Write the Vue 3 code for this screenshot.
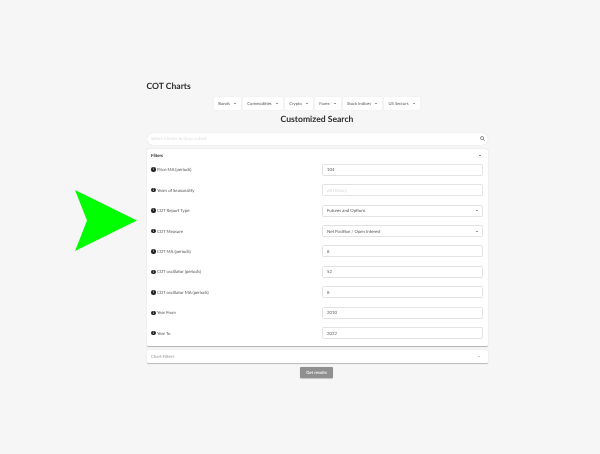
<script setup>
const menus = [
  { name: 'Bonds', width: 27 },
  { name: 'Commodities', width: 40 },
  { name: 'Crypto', width: 28 },
  { name: 'Forex', width: 26 },
  { name: 'Stock Indices', width: 39 },
  { name: 'US Sectors', width: 36 },
]
const rows = [
  { label: 'Price MA (periods)', value: '104' },
  { label: 'Years of Seasonality', value: 'All History', placeholder: true },
  { label: 'COT Report Type', value: 'Futures and Options', select: true },
  { label: 'COT Measure', value: 'Net Position / Open Interest', select: true },
  { label: 'COT MA (periods)', value: '8' },
  { label: 'COT oscillator (periods)', value: '52' },
  { label: 'COT oscillator MA (periods)', value: '8' },
  { label: 'Year From', value: '2010' },
  { label: 'Year To', value: '2022' },
]
</script>

<template>
  <div class="page">
    <svg class="arrow" width="64" height="64" viewBox="0 0 64 64">
      <polygon points="1,1 63,31.5 1,62 13,31.5" fill="#00ff00" />
    </svg>
    <main class="container">
      <h1 class="title">COT Charts</h1>
      <nav class="menus">
        <button v-for="m in menus" :key="m.name" class="menu" :style="{ width: m.width + 'px' }">
          <span>{{ m.name }}</span><i class="caret"></i>
        </button>
      </nav>
      <h2 class="subtitle">Customized Search</h2>
      <div class="search">
        <span class="search-text">Select a ticker to draw a chart</span>
        <svg width="5" height="5" viewBox="0 0 12 12" fill="none" stroke="#777" stroke-width="2">
          <circle cx="5" cy="5" r="3.8" /><path d="M8 8l3.5 3.5" />
        </svg>
      </div>
      <section class="panel">
        <header class="panel-head">
          <span>Filters</span><i class="caret up"></i>
        </header>
        <div class="rows">
          <div v-for="r in rows" :key="r.label" class="row">
            <div class="label">
              <span class="info">i</span>
              <span>{{ r.label }}</span>
            </div>
            <div class="field" :class="{ muted: r.placeholder }">
              <span>{{ r.value }}</span>
              <i v-if="r.select" class="caret small"></i>
            </div>
          </div>
        </div>
      </section>
      <section class="collapsed">
        <span>Chart Filters</span><i class="caret faint"></i>
      </section>
      <div class="actions">
        <button class="submit">Get results</button>
      </div>
    </main>
  </div>
</template>

<style>
html, body { margin: 0; background: #f6f6f6; }
</style>

<style scoped>
.page {
  position: relative;
  width: 600px;
  height: 454px;
  overflow: hidden;
  background: #f6f6f6;
  font-family: Lato, "Open Sans", sans-serif;
  color: #333;
  text-rendering: geometricPrecision;
}
.arrow { position: absolute; left: 74px; top: 189px; }
.container {
  width: 341px;
  margin-left: 146.5px;
  padding-top: 79.5px;
  display: flex;
  flex-direction: column;
  filter: blur(0.3px);
}
.title {
  margin: 0;
  height: 13px;
  line-height: 13px;
  font-size: 8.6px;
  font-weight: 700;
  color: #2e2e2e;
}
.menus {
  display: flex;
  justify-content: center;
  gap: 2px;
  margin-top: 4px;
  padding-right: 1px;
}
.menu {
  height: 13px;
  padding: 0;
  border: 0;
  border-radius: 1px;
  background: #fff;
  box-shadow: 0 0 1px rgba(0,0,0,.15);
  font: 400 4.2px Lato, sans-serif;
  text-rendering: geometricPrecision;
  color: #555;
  display: flex;
  align-items: center;
  justify-content: center;
  gap: 4px;
  white-space: nowrap;
}
.caret {
  display: inline-block;
  width: 0;
  height: 0;
  border-left: 1.2px solid transparent;
  border-right: 1.2px solid transparent;
  border-top: 1.6px solid #333;
}
.caret.up { border-top: 0; border-bottom: 1.8px solid #222; }
.caret.small { border-left-width: 1px; border-right-width: 1px; border-top-width: 1.5px; }
.caret.faint { border-top-color: #999; border-left-width: 1px; border-right-width: 1px; border-top-width: 1.5px; }
.subtitle {
  margin: 2.5px 0 0;
  height: 14px;
  line-height: 14px;
  text-align: center;
  font-size: 8.6px;
  font-weight: 700;
  color: #2e2e2e;
}
.search {
  margin-top: 7px;
  height: 11.5px;
  border-radius: 6px;
  background: #fff;
  box-shadow: 0 0 1px rgba(0,0,0,.2);
  display: flex;
  align-items: center;
  justify-content: space-between;
  padding: 0 3px 0 4.5px;
}
.search-text { font-size: 4.3px; color: #ddd; }
.panel {
  margin-top: 4.5px;
  height: 197px;
  box-sizing: border-box;
  background: #fff;
  border-radius: 1.5px;
  box-shadow: 0 0.5px 1px rgba(0,0,0,.28);
  padding: 0 4.5px;
}
.panel-head {
  height: 12px;
  display: flex;
  align-items: center;
  justify-content: space-between;
  font-size: 4.3px;
  font-weight: 700;
  color: #222;
  padding: 0 2.5px 0 0;
}
.rows {
  display: flex;
  flex-direction: column;
  gap: 8.45px;
  padding-top: 2.7px;
}
.row {
  height: 12px;
  display: flex;
  align-items: center;
  justify-content: space-between;
}
.label {
  display: flex;
  align-items: center;
  gap: 1.5px;
  font-size: 4.3px;
  color: #555;
}
.info {
  width: 4.5px;
  height: 4.5px;
  border-radius: 50%;
  background: #222;
  color: #fff;
  font-size: 3.5px;
  line-height: 4.5px;
  text-align: center;
  font-weight: 700;
}
.field {
  width: 161px;
  height: 12px;
  box-sizing: border-box;
  border: 0.5px solid #e2e2e2;
  border-radius: 1.5px;
  background: #fff;
  display: flex;
  align-items: center;
  justify-content: space-between;
  padding: 0 4px;
  font-size: 4.3px;
  color: #555;
}
.field.muted { color: #d8d8d8; }
.collapsed {
  margin-top: 4px;
  height: 12.5px;
  box-sizing: border-box;
  background: #fff;
  border-radius: 1.5px;
  box-shadow: 0 0.5px 1px rgba(0,0,0,.25);
  display: flex;
  align-items: center;
  justify-content: space-between;
  padding: 0 7.5px 0 4.5px;
  font-size: 4.3px;
  color: #999;
}
.actions { display: flex; justify-content: center; margin-top: 4.5px; padding-right: 1px; }
.submit {
  width: 33px;
  height: 11px;
  padding: 0;
  border: 0;
  border-radius: 1px;
  background: #8f8f8f;
  box-shadow: 0 0.5px 1px rgba(0,0,0,.2);
  color: #eee;
  font: 700 4.3px Lato, sans-serif;
  text-rendering: geometricPrecision;
}
</style>
